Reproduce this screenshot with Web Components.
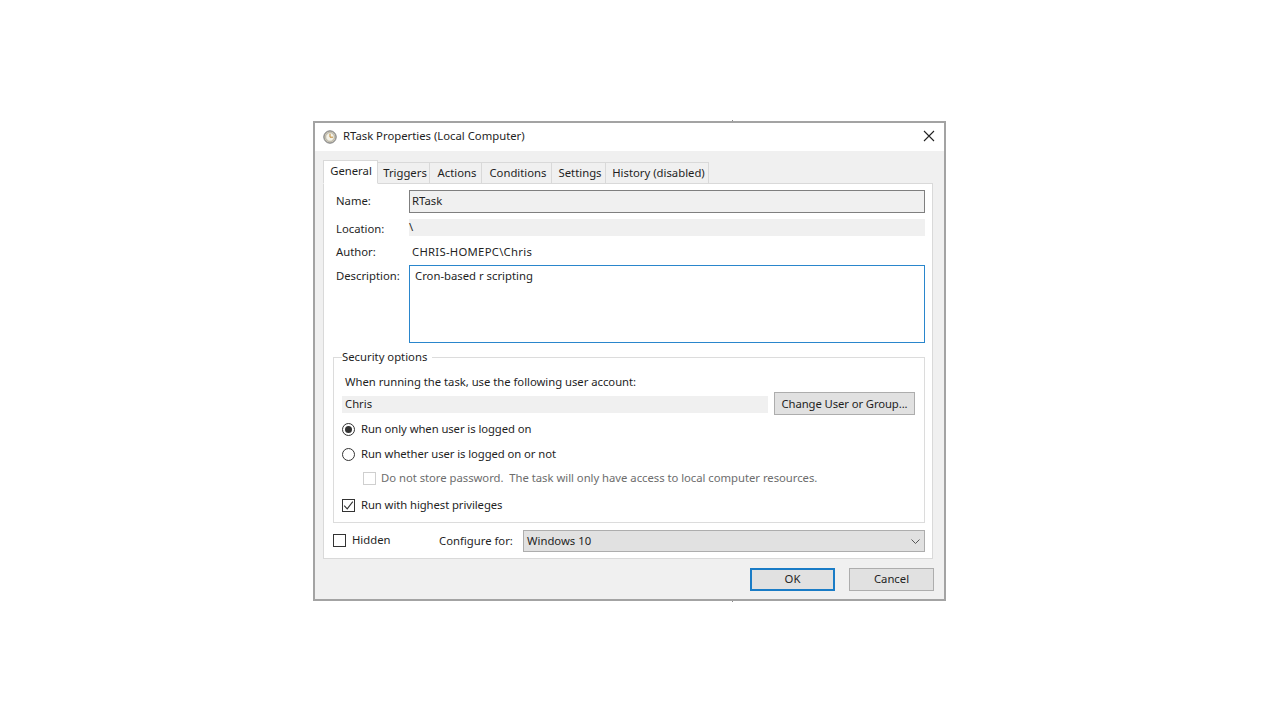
<!DOCTYPE html>
<html>
<head>
<meta charset="utf-8">
<title>RTask Properties</title>
<style>
  html, body { margin: 0; height: 100%; background: #fff; }
  body {
    display: flex;
    justify-content: center;
    padding-top: 121px;
    padding-right: 21px;
    box-sizing: border-box;
    font: 11.3px "Noto Sans", "Open Sans", sans-serif;
    color: #1f1f1f;
  }
</style>
</head>
<body>
<task-dialog>
  <span slot="title">RTask Properties (Local Computer)</span>
  <tab-strip tabs="General,Triggers,Actions,Conditions,Settings,History (disabled)" widths="55,52,52,70,54,103"></tab-strip>
  <general-panel></general-panel>
  <win-button slot="footer" width="85" lift default>OK</win-button>
  <win-button slot="footer" width="85" lift>Cancel</win-button>
</task-dialog>

<script>
// Small shared controls first, then the panel and the window around them

class WinButton extends HTMLElement {
    connectedCallback() {
        const root = this.attachShadow({ mode: 'open' });
        const width = this.getAttribute('width') || '85';
        root.innerHTML = `
            <style>
                :host { display: block; flex: none; }
                button {
                    display: block;
                    width: ${width}px;
                    height: 23px;
                    padding: 0;
                    box-sizing: border-box;
                    background: #e1e1e1;
                    border: 1px solid #adadad;
                    font: inherit;
                    color: inherit;
                    letter-spacing: inherit;
                }
                :host([default]) button { border: 2px solid #1a7cc6; }
                :host([lift]) button { padding-bottom: 2px; }
            </style>
            <button><slot></slot></button>
        `;
    }
}
customElements.define('win-button', WinButton);

class WinCheck extends HTMLElement {
    connectedCallback() {
        const root = this.attachShadow({ mode: 'open' });
        const tick = this.hasAttribute('checked')
            ? '<svg width="11" height="11" viewBox="0 0 11 11"><path d="M1.2 5.6 4.2 8.8 9.8 1.6" fill="none" stroke="#333" stroke-width="1.1"/></svg>'
            : '';
        root.innerHTML = `
            <style>
                :host { display: flex; align-items: center; gap: 6px; height: 16px; }
                .box {
                    width: 13px;
                    height: 13px;
                    box-sizing: border-box;
                    border: 1px solid #333;
                    background: #fff;
                    display: flex;
                    align-items: center;
                    justify-content: center;
                    flex: none;
                }
                .text { padding-bottom: 2px; }
                :host([disabled]) .box { border-color: #cfcfcf; }
                :host([disabled]) { color: #6d6d6d; gap: 5px; }
            </style>
            <span class="box">${tick}</span><span class="text"><slot></slot></span>
        `;
    }
}
customElements.define('win-check', WinCheck);

class WinRadio extends HTMLElement {
    connectedCallback() {
        const root = this.attachShadow({ mode: 'open' });
        root.innerHTML = `
            <style>
                :host { display: flex; align-items: center; gap: 6px; height: 16px; }
                .dot {
                    width: 13px;
                    height: 13px;
                    box-sizing: border-box;
                    border: 1px solid #333;
                    border-radius: 50%;
                    background: #fff;
                    flex: none;
                    display: flex;
                    align-items: center;
                    justify-content: center;
                }
                .text { padding-bottom: 2px; }
                :host([checked]) .dot::after {
                    content: "";
                    width: 7px;
                    height: 7px;
                    border-radius: 50%;
                    background: #333;
                }
            </style>
            <span class="dot"></span><span class="text"><slot></slot></span>
        `;
    }
}
customElements.define('win-radio', WinRadio);

class TabStrip extends HTMLElement {
    connectedCallback() {
        const root = this.attachShadow({ mode: 'open' });
        const tabs = this.getAttribute('tabs').split(',');
        const widths = this.getAttribute('widths').split(',');
        root.innerHTML = `
            <style>
                :host { display: flex; align-items: flex-end; height: 24px; position: relative; z-index: 1; margin-bottom: -1px; }
                .tab {
                    height: 22px;
                    box-sizing: border-box;
                    padding: 2px 0 0 3px;
                    line-height: 16px;
                    text-align: center;
                    background: #f0f0f0;
                    border: 1px solid #d9d9d9;
                    border-left: 0;
                    white-space: nowrap;
                }
                .tab.on {
                    height: 24px;
                    padding: 2px 0 0 1px;
                    background: #fff;
                    border-left: 1px solid #d9d9d9;
                    border-bottom-color: #fff;
                }
            </style>
            ${tabs.map((t, i) => `<div class="tab ${i === 0 ? 'on' : ''}" style="width:${widths[i]}px">${t}</div>`).join('')}
        `;
    }
}
customElements.define('tab-strip', TabStrip);

class GeneralPanel extends HTMLElement {
    connectedCallback() {
        const root = this.attachShadow({ mode: 'open' });
        root.innerHTML = `
            <style>
                :host {
                    display: block;
                    width: 610px;
                    height: 376px;
                    box-sizing: border-box;
                    background: #fff;
                    border: 1px solid #d9d9d9;
                    padding: 6px 7px 0 9px;
                }
                .row { display: grid; grid-template-columns: 76px 1fr; align-items: center; }
                .label { padding-left: 3px; }
                .name { height: 23px; }
                .name .label { padding-bottom: 2px; }
                .name .field {
                    height: 23px;
                    box-sizing: border-box;
                    background: #f0f0f0;
                    border: 1px solid #7f7f7f;
                    padding-left: 2px;
                    line-height: 19px;
                }
                .location { height: 17px; margin-top: 6px; }
                .location .label { padding-top: 1px; }
                .location .field { height: 17px; background: #f0f0f0; line-height: 15px; }
                .author { height: 16px; margin-top: 7px; }
                .author .field { padding-left: 3px; letter-spacing: .27px; }
                .description { align-items: start; margin-top: 6px; }
                .description .label { padding-top: 3px; }
                .description .field {
                    height: 78px;
                    box-sizing: border-box;
                    border: 1px solid #2a86cc;
                    padding: 2px 5px;
                    line-height: 16px;
                }
                fieldset {
                    margin: 6px 0 0 0;
                    padding: 0 9px 0 8px;
                    height: 174px;
                    box-sizing: border-box;
                    border: 1px solid #dcdcdc;
                    min-width: 0;
                }
                legend { padding: 0 5px 0 0; margin-left: 0; line-height: 16px; }
                .account-label { margin: 9px 0 0 3px; height: 16px; line-height: 16px; letter-spacing: -.03px; }
                .account { display: flex; align-items: center; gap: 6px; margin-top: 2px; }
                .account .field { flex: 1; height: 17px; margin-top: 2px; background: #f0f0f0; padding-left: 3px; line-height: 15px; }
                .account win-button { letter-spacing: -.1px; }
                win-radio, win-check.highest { letter-spacing: -.08px; }
                win-radio.first { margin-top: 6px; }
                win-radio.second { margin-top: 9px; }
                win-check.nostore { margin: 8px 0 0 21px; letter-spacing: -.03px; }
                win-check.highest { margin-top: 11px; }
                .bottom { display: flex; align-items: center; margin-top: 7px; height: 22px; }
                .bottom win-check { width: 106px; flex: none; margin-top: -2px; }
                .configure { width: 84px; flex: none; padding-bottom: 2px; }
                .select {
                    flex: 1;
                    height: 22px;
                    box-sizing: border-box;
                    background: #e1e1e1;
                    border: 1px solid #adadad;
                    display: flex;
                    align-items: center;
                    justify-content: space-between;
                    padding: 0 4px 0 3px;
                }
                .select span { padding-bottom: 2px; }
                .select svg { display: block; }
            </style>
            <div class="row name"><span class="label">Name:</span><div class="field">RTask</div></div>
            <div class="row location"><span class="label">Location:</span><div class="field">\\</div></div>
            <div class="row author"><span class="label">Author:</span><div class="field">CHRIS-HOMEPC\\Chris</div></div>
            <div class="row description"><span class="label">Description:</span><div class="field">Cron-based r scripting</div></div>
            <fieldset>
                <legend>Security options</legend>
                <div class="account-label">When running the task, use the following user account:</div>
                <div class="account">
                    <div class="field">Chris</div>
                    <win-button width="141">Change User or Group...</win-button>
                </div>
                <win-radio class="first" checked>Run only when user is logged on</win-radio>
                <win-radio class="second">Run whether user is logged on or not</win-radio>
                <win-check class="nostore" disabled>Do not store password.&nbsp; The task will only have access to local computer resources.</win-check>
                <win-check class="highest" checked>Run with highest privileges</win-check>
            </fieldset>
            <div class="bottom">
                <win-check>Hidden</win-check>
                <span class="configure">Configure for:</span>
                <div class="select">
                    <span>Windows 10</span>
                    <svg width="9" height="5" viewBox="0 0 9 5"><path d="M.5.5 4.5 4.5 8.5.5" fill="none" stroke="#555" stroke-width="1"/></svg>
                </div>
            </div>
        `;
    }
}
customElements.define('general-panel', GeneralPanel);

class TaskDialog extends HTMLElement {
    connectedCallback() {
        const root = this.attachShadow({ mode: 'open' });
        root.innerHTML = `
            <style>
                :host {
                    display: block;
                    width: 633px;
                    height: 480px;
                    box-sizing: border-box;
                    border: 2px solid #a3a3a3;
                    background: #f0f0f0;
                    position: relative;
                }
                :host::before, :host::after {
                    content: "";
                    position: absolute;
                    left: 417px;
                    width: 1px;
                    height: 1px;
                    background: #8a8a8a;
                }
                :host::before { top: -3px; }
                :host::after { bottom: -3px; }
                .titlebar {
                    height: 28px;
                    background: #fff;
                    display: flex;
                    align-items: center;
                    padding: 0 9px 0 8px;
                    gap: 6px;
                }
                .titlebar .text { flex: 1; padding-bottom: 3px; }
                .titlebar svg { display: block; flex: none; }
                .titlebar .close { margin-bottom: 2px; }
                .body { padding: 9px 11px 0 8px; }
                footer {
                    display: flex;
                    justify-content: flex-end;
                    gap: 14px;
                    padding: 9px 10px 0 0;
                }
            </style>
            <div class="titlebar">
                <svg width="14" height="14" viewBox="0 0 14 14">
                    <circle cx="7" cy="7" r="6.2" fill="#c9c4b4" stroke="#77787c"/>
                    <circle cx="7" cy="7" r="4.2" fill="#f4f2e8" stroke="#a9a698" stroke-width=".6"/>
                    <path d="M7 3.8V7.2H10" fill="none" stroke="#c08a35" stroke-width="1"/>
                </svg>
                <span class="text"><slot name="title"></slot></span>
                <svg class="close" width="12" height="12" viewBox="0 0 12 12"><path d="M1 1 11 11M11 1 1 11" stroke="#222" stroke-width="1.1" fill="none"/></svg>
            </div>
            <div class="body"><slot></slot></div>
            <footer><slot name="footer"></slot></footer>
        `;
    }
}
customElements.define('task-dialog', TaskDialog);
</script>
</body>
</html>
